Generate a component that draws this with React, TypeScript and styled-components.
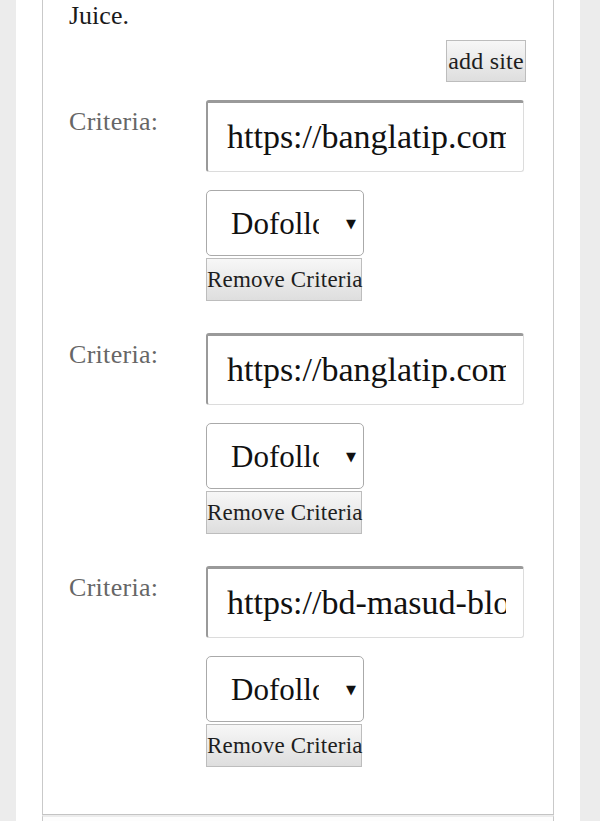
import React from "react";
import styled, { createGlobalStyle } from "styled-components";

const Global = createGlobalStyle`
  html, body { margin: 0; padding: 0; background: #ececec; }
  body { font-family: "Liberation Serif", "Times New Roman", serif; }
  * { box-sizing: border-box; }
`;

const Page = styled.div`
  margin: 0 20px 0 16px;
  background: #ffffff;
  padding-left: 26px;
  padding-right: 26px;
  height: 821px;
  overflow: hidden;
`;

const Box = styled.div`
  border-left: 1px solid #c9c9c9;
  border-right: 1px solid #c9c9c9;
  border-bottom: 1px solid #c4c4c4;
  padding: 0 27px 15px 26px;
`;

const Footer = styled.div`
  border-left: 1px solid #c9c9c9;
  border-right: 1px solid #c9c9c9;
  border-top: 2px solid #ececec;
  height: 20px;
  background: #fdfdfd;
`;

const Para = styled.p`
  margin: 0;
  padding-top: 1px;
  font-size: 26px;
  line-height: 30px;
  color: #1a1a1a;
`;

const Actions = styled.div`
  display: flex;
  justify-content: flex-end;
  margin-top: 9px;
  margin-bottom: 18px;
`;

const GrayButton = styled.button<{ $size: number; $w: number; $h: number }>`
  font: ${(p) => p.$size}px "Liberation Serif", "Times New Roman", serif;
  width: ${(p) => p.$w}px;
  height: ${(p) => p.$h}px;
  padding: 0;
  color: #1e1e1e;
  border: 1px solid #bdbdbd;
  border-radius: 0;
  background: linear-gradient(#f7f7f7, #dedede);
  white-space: nowrap;
  letter-spacing: 0.2px;
  cursor: pointer;
`;

const Row = styled.div`
  display: grid;
  grid-template-columns: 137px 318px;
  margin-bottom: 32px;
`;

const Label = styled.label`
  font-size: 26px;
  line-height: 26px;
  color: #666666;
  padding-top: 9px;
  letter-spacing: 0.3px;
`;

const Fields = styled.div`
  display: flex;
  flex-direction: column;
  align-items: flex-start;
`;

const UrlInput = styled.input`
  width: 318px;
  height: 72px;
  font: 34px "Liberation Serif", "Times New Roman", serif;
  color: #111;
  padding: 0 17px 0 19px;
  border: 1px solid #dcdcdc;
  border-top: 3px solid #9a9a9a;
  border-left: 2px solid #9a9a9a;
  border-radius: 3px;
  background: #fff;
  outline: none;
  margin-bottom: 18px;
`;

const SelectWrap = styled.div`
  position: relative;
  width: 158px;
  height: 66px;
  margin-bottom: 2px;
`;

const Select = styled.select`
  appearance: none;
  -webkit-appearance: none;
  width: 100%;
  height: 100%;
  font: 31px "Liberation Serif", "Times New Roman", serif;
  color: #111;
  padding: 0 44px 0 24px;
  border: 1px solid #aaaaaa;
  border-radius: 5px;
  background: #fff;
  outline: none;
`;

const Arrow = styled.span`
  position: absolute;
  right: 8px;
  top: 50%;
  transform: translateY(-50%);
  font-size: 13px;
  color: #111;
  pointer-events: none;
  font-family: "DejaVu Sans", sans-serif;
`;

const criteria = [
  "https://banglatip.com",
  "https://banglatip.com",
  "https://bd-masud-blog.com",
];

export default function App() {
  return (
    <>
      <Global />
      <Page>
        <Box>
          <Para>Juice.</Para>
          <Actions>
            <GrayButton $size={24} $w={80} $h={42}>add site</GrayButton>
          </Actions>
          {criteria.map((url, i) => (
            <Row key={i}>
              <Label>Criteria:</Label>
              <Fields>
                <UrlInput defaultValue={url} />
                <SelectWrap>
                  <Select defaultValue="dofollow">
                    <option value="dofollow">Dofollow</option>
                    <option value="nofollow">Nofollow</option>
                  </Select>
                  <Arrow>▼</Arrow>
                </SelectWrap>
                <GrayButton $size={23} $w={156} $h={43}>Remove Criteria</GrayButton>
              </Fields>
            </Row>
          ))}
        </Box>
        <Footer />
      </Page>
    </>
  );
}
